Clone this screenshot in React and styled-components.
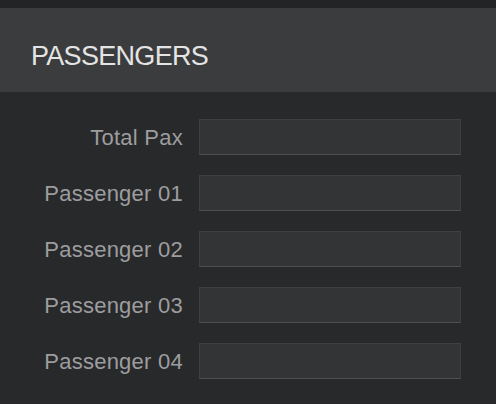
import React from 'react';
import styled, { createGlobalStyle } from 'styled-components';

const GlobalStyle = createGlobalStyle`
  html, body {
    margin: 0;
    padding: 0;
    background: #28292b;
    font-family: "Liberation Sans", Arial, sans-serif;
  }
`;

const Page = styled.div`
  width: 496px;
  height: 404px;
  background: #28292b;
  border-top: 8px solid #232426;
  box-sizing: border-box;
`;

const Header = styled.div`
  height: 84px;
  display: flex;
  align-items: center;
  padding: 12px 0 0 31px;
  box-sizing: border-box;
  background: #3b3c3e;
`;

const Title = styled.h2`
  margin: 0;
  font-size: 27px;
  font-weight: 400;
  letter-spacing: -0.7px;
  color: #e4e4e4;
`;

const Form = styled.div`
  display: flex;
  flex-direction: column;
  gap: 20px;
  padding-top: 27px;
`;

const Row = styled.div`
  display: flex;
  align-items: center;
  gap: 16px;
`;

const Label = styled.label`
  width: 183px;
  text-align: right;
  font-size: 22px;
  letter-spacing: 0.25px;
  color: #9d9d9f;
  padding-top: 2px;
`;

const Field = styled.input`
  width: 262px;
  height: 36px;
  box-sizing: border-box;
  margin: 0;
  padding: 0 8px;
  background: #333436;
  border: 1px solid #3e3f41;
  border-bottom: 1px solid #4f5052;
  border-radius: 0;
  outline: none;
  color: #d0d0d0;
  font: inherit;
  font-size: 16px;
`;

const fields = ['Total Pax', 'Passenger 01', 'Passenger 02', 'Passenger 03', 'Passenger 04'];

export default function App() {
  return (
    <>
      <GlobalStyle />
      <Page>
        <Header>
          <Title>PASSENGERS</Title>
        </Header>
        <Form>
          {fields.map(name => (
            <Row key={name}>
              <Label>{name}</Label>
              <Field type="text" />
            </Row>
          ))}
        </Form>
      </Page>
    </>
  );
}
